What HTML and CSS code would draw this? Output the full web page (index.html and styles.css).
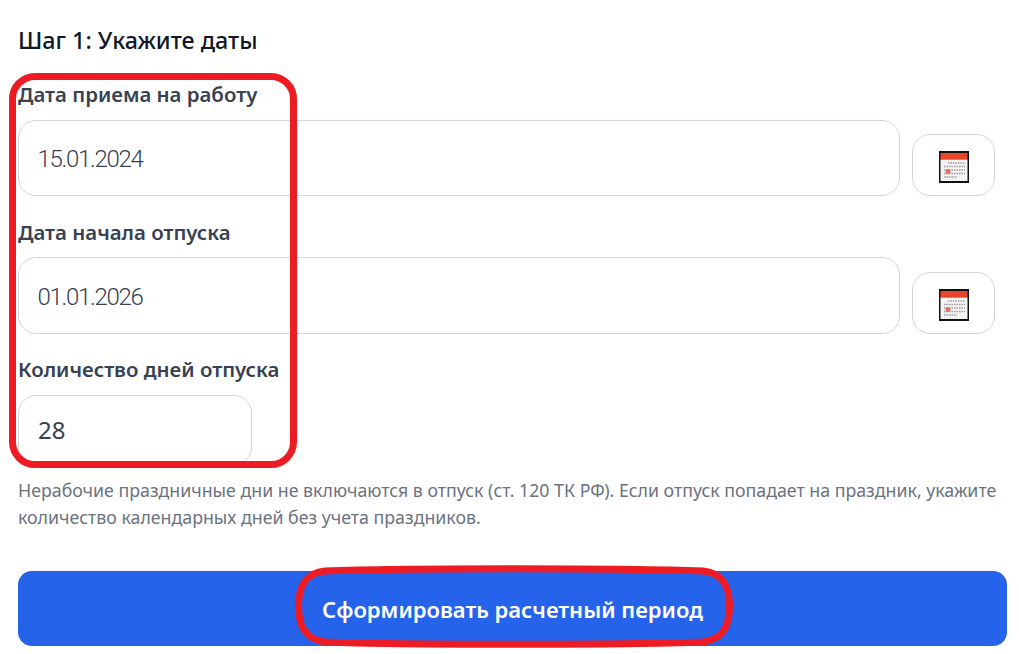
FILE: index.html
```html
<!DOCTYPE html>
<html lang="ru">
<head>
  <meta charset="utf-8" />
  <title>Шаг 1: Укажите даты</title>
  <link rel="stylesheet" href="styles.css">
</head>
<body>
  <div class="step">
    <h2>Шаг 1: Укажите даты</h2>

    <div class="field">
      <label>Дата приема на работу</label>
      <div class="date-row">
        <div class="input date-input">15.01.2024</div>
        <button class="cal-btn">
          <svg width="30" height="32" viewBox="0 0 30 32">
            <rect x="0" y="0" width="30" height="32" fill="#111"/>
            <rect x="1.5" y="2" width="27" height="6.5" fill="#e8452a"/>
            <rect x="1.5" y="8.5" width="27" height="21.5" fill="#f4f4f4"/>
            <path d="M9 12h17M5 15.5h21M5 19h21M5 22.5h21M5 26h13" stroke="#9a9a9a" stroke-width="1.5" stroke-dasharray="1.5 1"/>
            <circle cx="9" cy="20.5" r="2.5" fill="#e0705f"/>
          </svg>
        </button>
      </div>
    </div>

    <div class="field">
      <label>Дата начала отпуска</label>
      <div class="date-row">
        <div class="input date-input">01.01.2026</div>
        <button class="cal-btn">
          <svg width="30" height="32" viewBox="0 0 30 32">
            <rect x="0" y="0" width="30" height="32" fill="#111"/>
            <rect x="1.5" y="2" width="27" height="6.5" fill="#e8452a"/>
            <rect x="1.5" y="8.5" width="27" height="21.5" fill="#f4f4f4"/>
            <path d="M9 12h17M5 15.5h21M5 19h21M5 22.5h21M5 26h13" stroke="#9a9a9a" stroke-width="1.5" stroke-dasharray="1.5 1"/>
            <circle cx="9" cy="20.5" r="2.5" fill="#e0705f"/>
          </svg>
        </button>
      </div>
    </div>

    <div class="field">
      <label>Количество дней отпуска</label>
      <div class="input days-input">28</div>
    </div>

    <p class="hint">Нерабочие праздничные дни не включаются в отпуск (ст. 120 ТК РФ). Если отпуск попадает на праздник, укажите количество календарных дней без учета праздников.</p>

    <button class="submit">Сформировать расчетный период</button>
  </div>

  <div class="mark-box"></div>
  <svg class="mark-oval" width="446" height="90" viewBox="0 0 446 90">
    <path d="M34 9 C110 6 336 6 412 9 C430 11 438.5 22 438.5 44 C438.5 67 430 77 412 80 C336 83 110 83 34 80 C16 77 7.5 67 7.5 44 C7.5 22 16 11 34 9 Z" fill="none" stroke="#ed1c24" stroke-width="7"/>
  </svg>
</body>
</html>
```

FILE: styles.css
```css
html, body {
  height: 654px;
  overflow: hidden;
}
body {
  margin: 0;
  background-color: #fff;
  font-family: 'Noto Sans', 'Open Sans', sans-serif;
  color: #374151;
  position: relative;
}
.step {
  padding: 25px 12px 0 18px;
}
h2 {
  margin: 0 0 25px;
  font-size: 23.3px;
  line-height: 30px;
  font-weight: 500;
  color: #111827;
}
.field {
  margin-bottom: 21.5px;
}
label {
  display: block;
  font-size: 20.4px;
  line-height: 28px;
  font-weight: 600;
  margin-bottom: 11.5px;
}
.date-row {
  display: flex;
  align-items: flex-end;
  gap: 12px;
  padding-right: 12px;
}
.input {
  box-sizing: border-box;
  height: 76.5px;
  display: flex;
  align-items: center;
  padding-left: 19px;
  border: 1px solid #d1d5db;
  border-radius: 18px;
  background: #fff;
  font-size: 24px;
}
.date-input {
  flex: 1;
  padding-left: 18.5px;
  padding-top: 3px;
  font-family: 'Roboto', sans-serif;
  font-weight: 300;
  font-size: 24px;
  letter-spacing: -1.3px;
}
.days-input {
  width: 234px;
  height: 70px;
}
.cal-btn {
  box-sizing: border-box;
  width: 83px;
  height: 62px;
  display: flex;
  align-items: center;
  justify-content: center;
  padding: 4px 0 0;
  border: 1px solid #d1d5db;
  border-radius: 18px;
  background: #fff;
}
.hint {
  margin: -9px 0 0;
  font-size: 17.75px;
  line-height: 27px;
  color: #6b7280;
}
.submit {
  display: block;
  width: 100%;
  height: 75px;
  margin-top: 40px;
  border: none;
  border-radius: 14px;
  background-color: #2563eb;
  color: #fff;
  font-family: inherit;
  font-size: 22px;
  font-weight: 600;
}
.mark-box {
  position: absolute;
  left: 9px;
  top: 73px;
  width: 274px;
  height: 381px;
  border: 7px solid #ed1c24;
  border-radius: 26px;
}
.mark-oval {
  position: absolute;
  left: 291px;
  top: 562px;
}
```
